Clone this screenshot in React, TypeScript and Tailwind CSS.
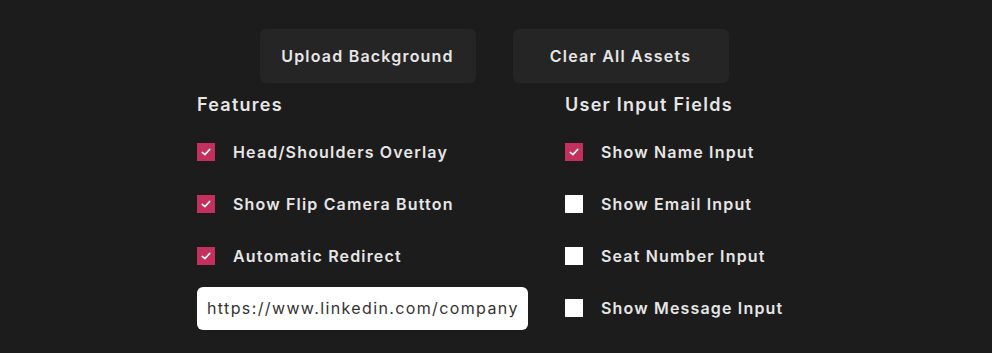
import { useState } from "react";

type Option = { id: string; label: string; checked: boolean };

const featureDefaults: Option[] = [
  { id: "overlay", label: "Head/Shoulders Overlay", checked: true },
  { id: "flip", label: "Show Flip Camera Button", checked: true },
  { id: "redirect", label: "Automatic Redirect", checked: true },
];

const inputDefaults: Option[] = [
  { id: "name", label: "Show Name Input", checked: true },
  { id: "email", label: "Show Email Input", checked: false },
  { id: "seat", label: "Seat Number Input", checked: false },
  { id: "message", label: "Show Message Input", checked: false },
];

function Checkbox({
  option,
  onToggle,
}: {
  option: Option;
  onToggle: () => void;
}) {
  return (
    <label className="flex h-[52px] cursor-pointer items-center gap-[18px]">
      <span
        onClick={onToggle}
        className={
          option.checked
            ? "flex h-[18px] w-[18px] items-center justify-center bg-[#c4305d]"
            : "flex h-[18px] w-[18px] items-center justify-center bg-white"
        }
      >
        {option.checked && (
          <svg viewBox="0 0 16 16" className="h-[12px] w-[12px]">
            <polyline
              points="3,8.5 6.5,11.5 13,4.5"
              fill="none"
              stroke="white"
              strokeWidth="2"
              strokeLinecap="round"
              strokeLinejoin="round"
            />
          </svg>
        )}
      </span>
      <span className="text-[16px] font-semibold tracking-[0.073em] text-[#e6e6e6]">
        {option.label}
      </span>
    </label>
  );
}

export default function App() {
  const [features, setFeatures] = useState(featureDefaults);
  const [inputs, setInputs] = useState(inputDefaults);
  const [url, setUrl] = useState("https://www.linkedin.com/company");

  const toggle = (
    list: Option[],
    set: (o: Option[]) => void,
    id: string,
  ) => set(list.map((o) => (o.id === id ? { ...o, checked: !o.checked } : o)));

  return (
    <div
      className="h-[353px] w-full bg-[#1c1c1c] pt-[29px]"
      style={{ fontFamily: "Inter, 'Noto Sans', sans-serif" }}
    >
      {/* Asset actions */}
      <div className="flex justify-center gap-[37px] pr-[4px]">
        <button className="h-[54px] w-[216px] rounded-md bg-[#252525] text-[16px] font-semibold tracking-[0.075em] text-[#e6e6e6]">
          Upload Background
        </button>
        <button className="h-[54px] w-[216px] rounded-md bg-[#252525] text-[16px] font-semibold tracking-[0.075em] text-[#e6e6e6]">
          Clear All Assets
        </button>
      </div>

      <div className="ml-[197px] mt-[10px] grid grid-cols-[331px_1fr] gap-x-[37px]">
        <div>
          <h2 className="h-[24px] text-[18px] font-semibold leading-[24px] tracking-[0.07em] text-[#e6e6e6]">
            Features
          </h2>
          <div className="mt-[9px]">
            {features.map((o) => (
              <Checkbox
                key={o.id}
                option={o}
                onToggle={() => toggle(features, setFeatures, o.id)}
              />
            ))}
            <div className="flex h-[52px] items-center">
              <input
                value={url}
                onChange={(e) => setUrl(e.target.value)}
                className="h-[43px] w-[331px] rounded-md bg-white px-[10px] text-[16px] tracking-[0.086em] text-[#333] outline-none"
              />
            </div>
          </div>
        </div>

        <div>
          <h2 className="h-[24px] text-[18px] font-semibold leading-[24px] tracking-[0.07em] text-[#e6e6e6]">
            User Input Fields
          </h2>
          <div className="mt-[9px]">
            {inputs.map((o) => (
              <Checkbox
                key={o.id}
                option={o}
                onToggle={() => toggle(inputs, setInputs, o.id)}
              />
            ))}
          </div>
        </div>
      </div>
    </div>
  );
}
